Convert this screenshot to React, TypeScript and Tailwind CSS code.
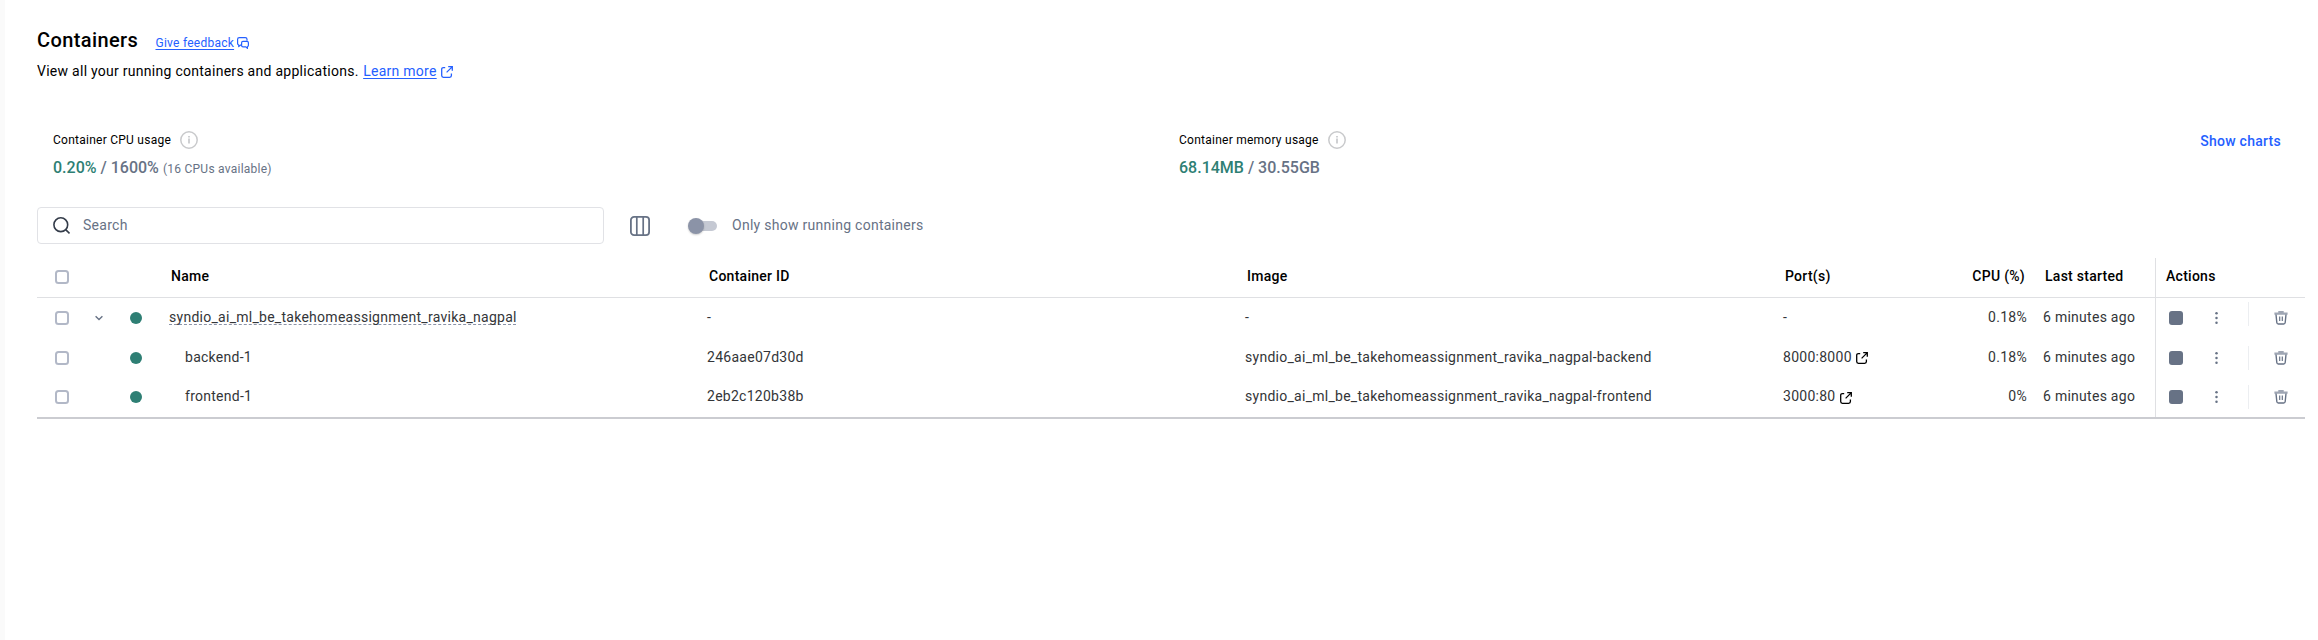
import type { ReactNode } from "react";

const GRID = "grid grid-cols-[50px_24px_50px_538px_538px_538px_190px_70px_120px_150px]";

type Row = {
  name: string;
  group?: boolean;
  id: string;
  image: string;
  port: string;
  cpu: string;
  started: string;
};

const rows: Row[] = [
  { name: "syndio_ai_ml_be_takehomeassignment_ravika_nagpal", group: true, id: "-", image: "-", port: "-", cpu: "0.18%", started: "6 minutes ago" },
  { name: "backend-1", id: "246aae07d30d", image: "syndio_ai_ml_be_takehomeassignment_ravika_nagpal-backend", port: "8000:8000", cpu: "0.18%", started: "6 minutes ago" },
  { name: "frontend-1", id: "2eb2c120b38b", image: "syndio_ai_ml_be_takehomeassignment_ravika_nagpal-frontend", port: "3000:80", cpu: "0%", started: "6 minutes ago" },
];

function ExternalIcon({ className }: { className: string }) {
  return (
    <svg className={className} width="12" height="12" viewBox="0 0 12 12" fill="none" stroke="currentColor" strokeWidth="1.3">
      <path d="M4.2 1.6H2.4C1.4 1.6.7 2.3.7 3.3v6.3c0 1 .7 1.7 1.7 1.7h6.3c1 0 1.7-.7 1.7-1.7V7.4" />
      <path d="M7.2.7h4.1v4.1M11.1.9 5.6 6.4" />
    </svg>
  );
}

function FeedbackIcon() {
  return (
    <svg width="12" height="12" viewBox="0 0 12 12" fill="none" stroke="currentColor" strokeWidth="1.2" strokeLinejoin="round">
      <path d="M4.4 8.2H3.2L1.7 9.6V8C1 7.7.6 7.2.6 6.5V2.3C.6 1.3 1.3.6 2.3.6h6c1 0 1.7.7 1.7 1.7v1.500" />
      <path d="M6 4.4h4c.8 0 1.400.6 1.400 1.400v2.500c0 .7-.4 1.200-1 1.400v1.700L8.900 9.800H6c-.8 0-1.400-.6-1.400-1.400V5.800c0-.8.6-1.400 1.400-1.400z" />
    </svg>
  );
}

function InfoIcon() {
  return (
    <svg width="18" height="18" viewBox="0 0 18 18" fill="none">
      <circle cx="9" cy="9" r="8.2" stroke="#c9cacc" strokeWidth="1.5" />
      <path d="M9 7.6v5M9 5v1.6" stroke="#c4c5c8" strokeWidth="1.6" />
    </svg>
  );
}

function TrashIcon() {
  return (
    <svg width="14" height="14" viewBox="0 0 14 14" fill="none">
      <path d="M4.300 0h5.400v1.500H13.600V3.800H.4V1.500h3.900z" fill="#9fa6b4" />
      <path d="M2 3.500l.8 8c.1.900.6 1.500 1.500 1.500h5.400c.9 0 1.400-.6 1.500-1.500l.8-8" stroke="#677285" strokeWidth="1.400" />
      <path d="M5.700 5.500v4.500M8.300 5.500v4.500" stroke="#677285" strokeWidth="1.200" />
    </svg>
  );
}

function Checkbox({ className = "" }: { className?: string }) {
  return <span className={`block size-3.5 justify-self-center rounded-[3.5px] border-2 border-[#b2b8c7] ${className}`} />;
}

function Heading({ children, className }: { children: ReactNode; className: string }) {
  return <span className={`pb-[3px] font-medium text-black ${className}`}>{children}</span>;
}

export default function App() {
  return (
    <div className="flex h-[640px] w-full bg-white font-['Roboto',sans-serif] text-sm tracking-[0.27px] text-black">
      <aside className="w-[5px] shrink-0 bg-[#fafafa]" />
      <main className="ml-8 w-[2268px] shrink-0">
        <header className="pt-[26px]">
          <div className="flex h-7 items-baseline">
            <h1 className="w-[118.5px] text-xl leading-7 font-medium tracking-[0.4px]">Containers</h1>
            <a className="text-xs leading-4 tracking-[0.25px] text-[#2560ff] underline underline-offset-2">Give feedback</a>
            <span className="ml-[3px] translate-y-0.5 text-[#2560ff]"><FeedbackIcon /></span>
          </div>
          <p className="mt-[7px] flex h-5 items-center leading-5">
            View all your running containers and applications.
            <a className="ml-[4.5px] text-[#2560ff] underline underline-offset-2">Learn more</a>
            <ExternalIcon className="ml-[4px] translate-y-px text-[#2560ff]" />
          </p>
        </header>

        <section className="mt-[50px] flex h-[76px] pl-4 text-[#677285]">
          <div className="w-[1126px]">
            <div className="flex h-[18px] items-center text-xs leading-4 tracking-[0.25px] text-black">
              <span className="mr-[9px]">Container CPU usage</span>
              <InfoIcon />
            </div>
            <div className="mt-[7px] flex items-baseline text-base leading-6 font-medium tracking-normal">
              <span className="text-[#2e7f74]">0.20%</span>
              <span className="ml-1">/ 1600%</span>
              <span className="ml-1 text-xs leading-4 font-normal tracking-[0.25px]">(16 CPUs available)</span>
            </div>
          </div>
          <div className="flex-1">
            <div className="flex h-[18px] items-center text-xs leading-4 tracking-[0.25px] text-black">
              <span className="mr-[9px]">Container memory usage</span>
              <InfoIcon />
            </div>
            <div className="mt-[7px] text-base leading-6 font-medium tracking-normal">
              <span className="text-[#2e7f74]">68.14MB</span> / 30.55GB
            </div>
          </div>
          <button className="mr-6 h-5 leading-5 font-medium tracking-[0.27px] text-[#2560ff]">Show charts</button>
        </section>

        <section className="flex h-[37px] items-center text-[#677285]">
          <div className="flex h-[37px] w-[567px] items-center rounded-[4px] border border-[#e1e2e6] pl-[14.5px]">
            <svg width="17" height="17" viewBox="0 0 17 17" fill="none" stroke="#343c4a" strokeWidth="1.6">
              <circle cx="7.8" cy="7.7" r="6.9" />
              <path d="m12.7 12.6 3.8 3.8" />
            </svg>
            <span className="ml-[13.5px] pb-px leading-5">Search</span>
          </div>
          <svg className="mt-px ml-[26px]" width="20" height="20" viewBox="0 0 20 20" fill="none" stroke="#677285">
            <rect x=".9" y=".9" width="18.2" height="18.2" rx="3.2" strokeWidth="1.8" />
            <path d="M6.800 1v18M13.200 1v18" strokeWidth="1.700" />
          </svg>
          <div className="mt-px ml-[38px] flex w-[29px] items-center">
            <span className="z-10 size-4 rounded-full bg-[#8b93a7] shadow-[0_1px_2px_rgba(0,0,0,0.2)]" />
            <span className="-ml-2 h-2.5 flex-1 rounded-full bg-[#c5c9d3]" />
          </div>
          <span className="ml-[15px] pb-px leading-5">Only show running containers</span>
        </section>

        <section className="mt-[14px] border-b-2 border-[#cbccd1]">
          <div className={`${GRID} h-10 items-center border-b border-[#dfe0e3] leading-5`}>
            <Checkbox className="mb-px" />
            <span />
            <span />
            <Heading className="pl-[10px]">Name</Heading>
            <Heading className="pl-[10px]">Container ID</Heading>
            <Heading className="pl-[10px]">Image</Heading>
            <Heading className="pl-[10px]">Port(s)</Heading>
            <Heading className="pr-[10px] text-right whitespace-nowrap">CPU (%)</Heading>
            <Heading className="pl-[10px]">Last started</Heading>
            <div className="flex h-full items-center border-l border-[#dfe0e3] pl-[10px]">
              <Heading className="">Actions</Heading>
            </div>
          </div>
          {rows.map((row, i) => (
            <div key={row.name} className={`${GRID} ${i === 2 ? "h-[39px]" : "h-10"} leading-5 text-[#333538]`}>
              <div className={`col-span-9 grid grid-cols-subgrid items-center ${i === 2 ? "h-[38px]" : "h-10"}`}>
                <Checkbox />
                {row.group ? (
                  <svg className="justify-self-center" width="8" height="6" viewBox="0 0 8 6" fill="none" stroke="#677285" strokeWidth="1.4">
                    <path d="m.6 1.2 3.4 3.3 3.4-3.3" />
                  </svg>
                ) : (
                  <span />
                )}
                <span className="size-[11.5px] justify-self-center rounded-full bg-[#2e7f74]" />
                <span className={row.group ? "pb-0.5 pl-2" : "pb-0.5 pl-6"}>
                  <span className={row.group ? "underline decoration-[#8b93a7] decoration-dashed decoration-1 underline-offset-2 [text-decoration-skip-ink:none]" : ""}>{row.name}</span>
                </span>
                <span className="pb-0.5 pl-2">{row.id}</span>
                <span className="pb-0.5 pl-2">{row.image}</span>
                <span className="flex items-center pb-0.5 pl-2">
                  {row.port}
                  {!row.group && <ExternalIcon className={`ml-[4.5px] text-black ${i === 2 ? "translate-y-0.5" : "translate-y-px"}`} />}
                </span>
                <span className="pr-2 pb-0.5 text-right">{row.cpu}</span>
                <span className="pb-0.5 pl-2">{row.started}</span>
              </div>
              <div className="border-l border-[#dfe0e3]">
                <div className={`flex items-center pl-[13px] ${i === 2 ? "h-[38px]" : "h-10"}`}>
                  <span className="size-3.5 rounded-[3px] bg-[#677285]" />
                  <svg className="ml-[31.5px]" width="3" height="14" viewBox="0 0 3 14" fill="#677285">
                    <circle cx="1.5" cy="2.2" r="1.25" />
                    <circle cx="1.5" cy="7" r="1.25" />
                    <circle cx="1.5" cy="11.8" r="1.25" />
                  </svg>
                  <span className={`ml-[30.5px] h-6 w-px bg-[#eceef1] ${row.group ? "mb-2" : ""}`} />
                  <span className="ml-[25px]"><TrashIcon /></span>
                </div>
              </div>
            </div>
          ))}
        </section>
      </main>
    </div>
  );
}
